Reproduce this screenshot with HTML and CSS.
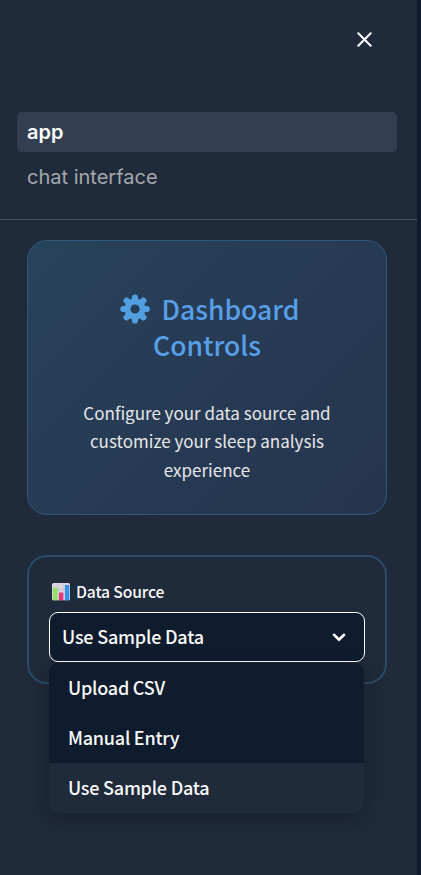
FILE: index.html
```html
<!DOCTYPE html>
<html lang="en">
<head>
<meta charset="utf-8">
<title>app</title>
<link rel="stylesheet" href="styles.css">
</head>
<body>
<aside class="sidebar">
  <header class="sidebar-header">
    <button class="close" aria-label="Close">
      <svg width="15" height="15" viewBox="0 0 15 15"><path d="M1.3 1.3 13.7 13.7M13.7 1.3 1.3 13.7"/></svg>
    </button>
  </header>
  <nav class="nav">
    <a class="nav-link active"><span>app</span></a>
    <a class="nav-link"><span>chat interface</span></a>
  </nav>
  <section class="card">
    <h2 class="card-title">
      <svg class="gear" width="30" height="30" viewBox="-15 -15 30 30">
        <g stroke="#519fe0" stroke-width="6.2" stroke-linecap="round">
          <path d="M0-11.5V-8M0 11.5V8M-11.7 0H-8M11.7 0H8M-8.4-8.4-6-6M8.4 8.4 6 6M-8.4 8.4-6 6M8.4-8.4 6-6"/>
        </g>
        <circle r="7.6" fill="none" stroke="#519fe0" stroke-width="6"/>
      </svg>
      <span>Dashboard</span><br>
      <span>Controls</span>
    </h2>
    <p class="card-text"><span>Configure your data source and</span><br><span>customize your sleep analysis</span><br><span>experience</span></p>
  </section>
  <section class="field">
    <div class="label">
      <svg width="18" height="18" viewBox="0 0 18 18">
        <rect width="18" height="17.3" rx="1.5" fill="#ded3e2"/>
        <path d="M0 6.5H18M0 12H18M6.5 0V17M12 0V17" stroke="#c8bccd" stroke-width=".7"/>
        <rect x="1" y="4.5" width="4.5" height="12.8" fill="#90e45f"/>
        <rect x="7" y="9.5" width="4.3" height="7.8" fill="#e9387b"/>
        <rect x="13" y="2" width="4.3" height="15.3" fill="#3296e8"/>
      </svg>
      <span>Data Source</span>
    </div>
    <div class="select-wrap">
      <div class="select">
        <span>Use Sample Data</span>
        <svg width="14" height="9" viewBox="0 0 14 9"><path d="M2 1.8 7 6.6 12 1.8"/></svg>
      </div>
      <ul class="menu">
        <li><span>Upload CSV</span></li>
        <li><span>Manual Entry</span></li>
        <li class="selected"><span>Use Sample Data</span></li>
      </ul>
    </div>
  </section>
</aside>
</body>
</html>
```
FILE: styles.css
```css
* { box-sizing: border-box; }
body {
  margin: 0;
  height: 875px;
  overflow: hidden;
  background: #0f1c2d;
  color: #fafafa;
  font-family: "Noto Sans CJK SC", "Noto Sans", sans-serif;
}
.sidebar { width: 417px; height: 875px; background: #1f2a3a; }
.sidebar-header { height: 112px; padding: 32px 45px 0 0; display: flex; justify-content: flex-end; align-items: flex-start; }
.close { display: block; padding: 0; border: 0; background: none; }
.close svg { display: block; fill: none; stroke: #fff; stroke-width: 2; stroke-linecap: round; }
.nav {
  height: 108px;
  padding: 0 20px 0 17px;
  border-bottom: 1px solid #485464;
  display: flex;
  flex-direction: column;
  gap: 5px;
  font-family: Inter, sans-serif;
  font-size: 20px;
}
.nav-link { height: 40px; padding: 0 10px; border-radius: 5px; line-height: 40px; color: #a5a8ad; }
.nav-link.active { background: #333f50; color: #fff; font-weight: 600; }
.card {
  height: 275px;
  margin: 20px 30px 0 27px;
  padding: 50px 30px 0;
  border: 1px solid #2f587a;
  border-radius: 20px;
  background: linear-gradient(135deg, #27435a, #273c55 40%, #26354e);
  text-align: center;
}
.card-title { margin: 0; font-size: 26.5px; line-height: 36px; font-weight: 500; color: #579fe7; }
.gear { margin: 0 6px 0 5px; vertical-align: -4px; }
.card-text { margin: 36px 0 0; font-size: 17px; line-height: 28.4px; color: #e6e7e9; }
.field {
  height: 129px;
  margin: 40px 30px 0 27px;
  padding: 20px 20px 0;
  border: 2px solid #2a4b65;
  border-radius: 20px;
}
.label { height: 30px; padding-left: 3px; display: flex; align-items: center; gap: 6px; font-size: 15.7px; letter-spacing: -.15px; font-weight: 500; line-height: 30px; }
.select-wrap { position: relative; margin-top: 5px; }
.select {
  height: 50px;
  padding: 0 18px 0 12px;
  border: 1px solid #fff;
  border-radius: 9px;
  background: #0f1c2d;
  display: flex;
  align-items: center;
  justify-content: space-between;
  font-size: 18px;
  letter-spacing: -.2px;
  font-weight: 500;
}
.select span { line-height: 46px; padding-bottom: 2px; }
.select svg { fill: none; stroke: #fff; stroke-width: 2.6; stroke-linecap: round; }
.menu {
  position: absolute;
  top: 51px;
  left: 0;
  width: 315px;
  margin: 0;
  padding: 0;
  list-style: none;
  overflow: hidden;
  border-radius: 9px;
  background: #0f1c2d;
  box-shadow: 0 5px 20px rgba(0, 0, 0, .25);
  font-size: 18px;
  letter-spacing: -.23px;
  font-weight: 500;
}
.menu li { height: 50px; padding-left: 19px; line-height: 48px; }
.menu .selected { background: #1f2a3a; }
```
